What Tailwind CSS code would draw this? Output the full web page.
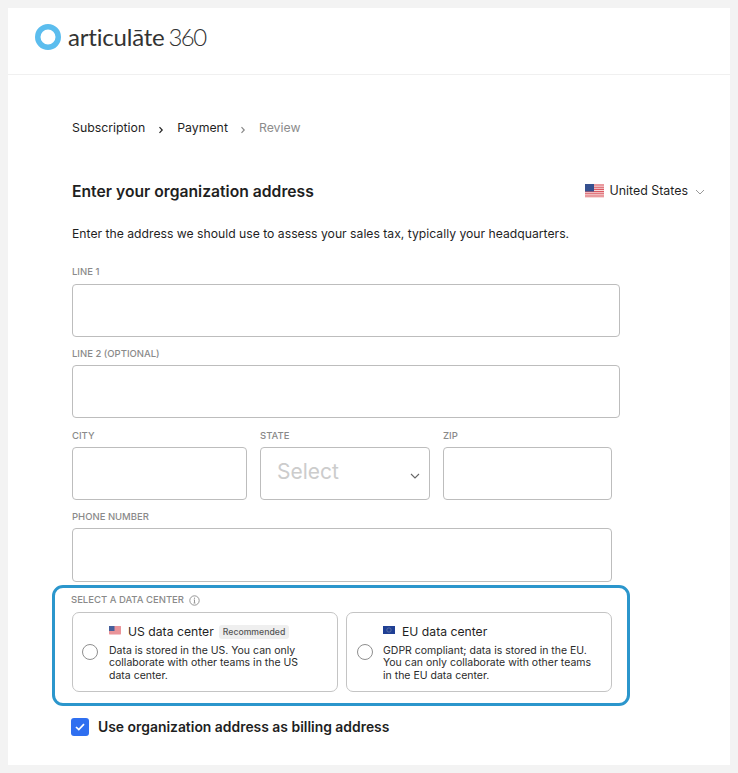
<!DOCTYPE html>
<html lang="en">
<head>
  <meta charset="UTF-8"/>
  <meta name="viewport" content="width=device-width, initial-scale=1.0"/>
  <title>Organization address</title>
  <script src="https://cdn.jsdelivr.net/npm/@tailwindcss/browser@4"></script>
</head>
<body class="bg-[#f3f3f3] font-['Inter','Liberation_Sans',sans-serif] text-[#1f1f1f] antialiased">
  <div class="h-[773px] p-2">
    <div class="bg-white h-[757px] overflow-hidden">
      <!-- Header -->
      <header class="h-[67px] border-b border-[#f0f0f0] flex items-center pl-[27px] pb-[8px]">
        <svg width="26" height="26" viewBox="0 0 26 26" class="shrink-0"><circle cx="13" cy="13" r="10.25" fill="none" stroke="#5bbdee" stroke-width="5.5"/></svg>
        <span class="ml-[7px] text-[24px] leading-none text-[#333] font-['Lato',sans-serif] whitespace-nowrap -mt-[1px] tracking-[-0.2px]">articulāte<span class="ml-[4px] font-light text-[24px] tracking-[-1.6px]">360</span></span>
      </header>

      <div class="pl-[64px]">
        <!-- Steps -->
        <nav class="flex items-center h-[18px] mt-[44px] text-[12.3px]">
          <span>Subscription</span>
          <svg width="6" height="8" viewBox="0 0 6 8" class="ml-[13px] mt-[3px]"><path d="M1.5 1.2 4.2 4 1.5 6.8" fill="none" stroke="#222" stroke-width="1.2"/></svg>
          <span class="ml-[13px]">Payment</span>
          <svg width="6" height="8" viewBox="0 0 6 8" class="ml-[12px] mt-[3px]"><path d="M1.5 1.2 4.2 4 1.5 6.8" fill="none" stroke="#888" stroke-width="1.2"/></svg>
          <span class="ml-[13px] text-[#8c8c8c]">Review</span>
        </nav>

        <div class="flex items-center justify-between mt-[45px] pr-[25px] h-[20px]">
          <h1 class="text-[15.7px] font-semibold">Enter your organization address</h1>
          <div class="flex items-center text-[12.4px] -mt-[1px]">
            <svg width="19" height="14" viewBox="0 0 19 14" class="mr-[6px]">
              <rect width="19" height="14" fill="#f7dada"/>
              <path d="M0 1h19M0 3.2h19M0 5.4h19M0 7.6h19M0 9.8h19M0 12h19" stroke="#dc5a63" stroke-width="1.1"/>
              <rect width="9" height="7.5" fill="#35508f"/>
            </svg>
            <span>United States</span>
            <svg width="10" height="6" viewBox="0 0 10 6" class="ml-[7px] mt-[2px]"><path d="M1 1 5 5 9 1" fill="none" stroke="#999" stroke-width="1"/></svg>
          </div>
        </div>

        <p class="mt-[23px] text-[12.2px] leading-[18px]">Enter the address we should use to assess your sales tax, typically your headquarters.</p>

        <!-- Address form -->
        <label class="block mt-[23px] text-[9.5px] leading-[12px] font-medium text-[#8a8a8a]">LINE 1</label>
        <div class="mt-[6px] w-[548px] h-[53px] border border-[#bdbdbd] rounded-[4px]"></div>

        <label class="block mt-[11px] text-[9.5px] leading-[12px] font-medium text-[#8a8a8a]">LINE 2 (OPTIONAL)</label>
        <div class="mt-[5px] w-[548px] h-[53px] border border-[#bdbdbd] rounded-[4px]"></div>

        <div class="flex mt-[12px] w-[540px] justify-between">
          <div class="w-[175px]">
            <label class="block text-[9.5px] leading-[12px] font-medium text-[#8a8a8a]">CITY</label>
            <div class="mt-[5px] h-[53px] border border-[#bdbdbd] rounded-[4px]"></div>
          </div>
          <div class="w-[170px]">
            <label class="block text-[9.5px] leading-[12px] font-medium text-[#8a8a8a]">STATE</label>
            <div class="mt-[5px] h-[53px] border border-[#bdbdbd] rounded-[4px] flex items-center justify-between pl-[16px] pr-[9px]">
              <span class="text-[21px] text-[#cccccc] -mt-[3px]">Select</span>
              <svg width="10" height="6" viewBox="0 0 10 6" class="mt-[5px]"><path d="M1 1 5 5 9 1" fill="none" stroke="#666" stroke-width="1.1"/></svg>
            </div>
          </div>
          <div class="w-[169px]">
            <label class="block text-[9.5px] leading-[12px] font-medium text-[#8a8a8a]">ZIP</label>
            <div class="mt-[5px] h-[53px] border border-[#bdbdbd] rounded-[4px]"></div>
          </div>
        </div>

        <label class="block mt-[11px] text-[9.5px] leading-[12px] font-medium text-[#8a8a8a]">PHONE NUMBER</label>
        <div class="mt-[5px] w-[540px] h-[54px] border border-[#bdbdbd] rounded-[4px]"></div>

        <!-- Data center -->
        <div class="-ml-[20px] mt-[3px] w-[578px] h-[121px] border-[3px] border-[#2b96cc] rounded-[11px] pl-[16px] pt-[6px]">
          <div class="flex items-center h-[12px] text-[9.5px] font-medium text-[#8a8a8a]">
            SELECT A DATA CENTER
            <svg width="11" height="11" viewBox="0 0 11 11" class="ml-[5px]"><circle cx="5.5" cy="5.5" r="4.7" fill="none" stroke="#8a8a8a" stroke-width="0.9"/><path d="M5.5 4.8v3M4.6 8h1.8M4.8 4.8h.7" fill="none" stroke="#8a8a8a" stroke-width="0.9"/><circle cx="5.5" cy="3.2" r="0.6" fill="#8a8a8a"/></svg>
          </div>
          <div class="flex gap-[8px] mt-[6px] ml-[1px]">
            <div class="w-[266px] h-[80px] border border-[#c4c4c4] rounded-[7px] flex items-center pl-[9px]">
              <span class="w-[16px] h-[16px] rounded-full border border-[#8f8f8f] shrink-0"></span>
              <div class="ml-[11px]">
                <div class="flex items-center h-[20px]">
                  <svg width="12" height="9" viewBox="0 0 12 9" class="mr-[7px] -mt-[2px]">
                    <rect width="12" height="9" rx="1" fill="#f4c6c9"/>
                    <path d="M0 1h12M0 3h12M0 5h12M0 7h12" stroke="#df636b" stroke-width="1"/>
                    <rect width="5.5" height="5" fill="#46609c"/>
                  </svg>
                  <span class="text-[12.2px]">US data center</span>
                  <span class="ml-[5px] h-[14px] px-[4px] bg-[#efefef] rounded-[3px] text-[8.7px] font-medium text-[#555] leading-[14px]">Recommended</span>
                </div>
                <p class="mt-[3px] text-[10.5px] leading-[12.5px] text-[#2a2a2a]">Data is stored in the US. You can only<br/>collaborate with other teams in the US<br/>data center.</p>
              </div>
            </div>
            <div class="w-[266px] h-[80px] border border-[#c4c4c4] rounded-[7px] flex items-center pl-[10px]">
              <span class="w-[16px] h-[16px] rounded-full border border-[#8f8f8f] shrink-0"></span>
              <div class="ml-[10px]">
                <div class="flex items-center h-[20px]">
                  <svg width="12" height="9" viewBox="0 0 12 9" class="mr-[7px] -mt-[2px]">
                    <rect width="12" height="8" fill="#1f3f94"/>
                    <circle cx="6" cy="4" r="2.2" fill="none" stroke="#6d7fa8" stroke-width="0.7"/>
                  </svg>
                  <span class="text-[12.2px]">EU data center</span>
                </div>
                <p class="mt-[3px] text-[10.5px] leading-[12.5px] text-[#2a2a2a]">GDPR compliant; data is stored in the EU.<br/>You can only collaborate with other teams<br/>in the EU data center.</p>
              </div>
            </div>
          </div>
        </div>

        <div class="flex items-center mt-[11px] -ml-[1px] h-[20px]">
          <span class="w-[18px] h-[18px] bg-[#2f6ff0] rounded-[3px] flex items-center justify-center">
            <svg width="10" height="8" viewBox="0 0 10 8"><path d="M1 4 3.8 6.6 9 1.2" fill="none" stroke="#fff" stroke-width="1.7"/></svg>
          </span>
          <span class="ml-[9px] text-[13.9px] font-semibold">Use organization address as billing address</span>
        </div>
      </div>
    </div>
  </div>
</body>
</html>
